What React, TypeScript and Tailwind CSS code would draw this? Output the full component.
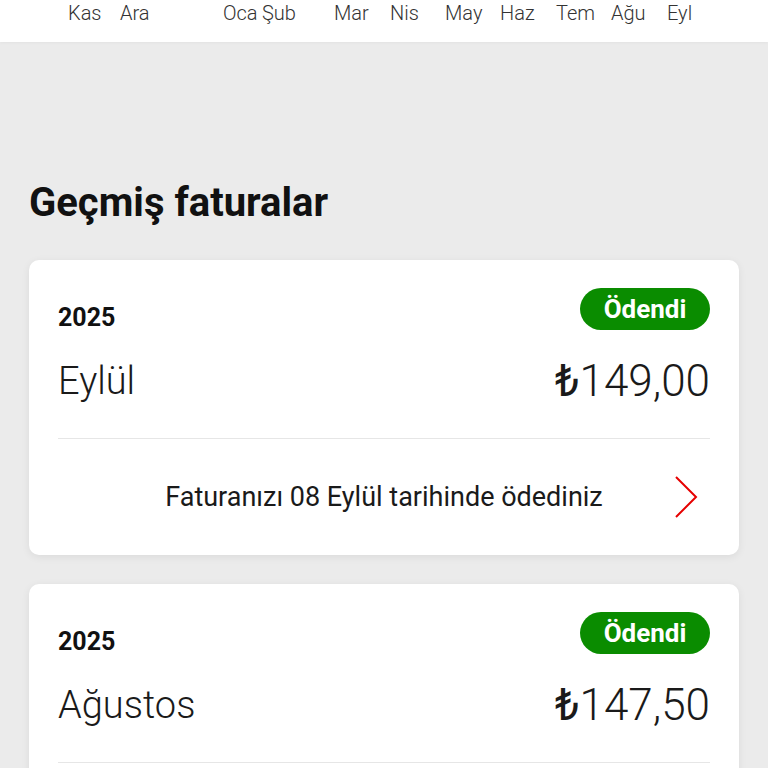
import { ReactNode } from "react";

const months: { label: string; w: string }[] = [
  { label: "Kas", w: "w-[52px]" },
  { label: "Ara", w: "w-[103px]" },
  { label: "Oca", w: "w-[39px]" },
  { label: "Şub", w: "w-[72px]" },
  { label: "Mar", w: "w-[56px]" },
  { label: "Nis", w: "w-[55px]" },
  { label: "May", w: "w-[55px]" },
  { label: "Haz", w: "w-[56px]" },
  { label: "Tem", w: "w-[55px]" },
  { label: "Ağu", w: "w-[56px]" },
  { label: "Eyl", w: "w-[40px]" },
];

const bills = [
  {
    year: "2025",
    month: "Eylül",
    amount: "149,00",
    note: "Faturanızı 08 Eylül tarihinde ödediniz",
  },
  {
    year: "2025",
    month: "Ağustos",
    amount: "147,50",
    note: "Faturanızı 08 Ağustos tarihinde ödediniz",
  },
];

const Chevron = () => (
  <svg width="24" height="42" viewBox="0 0 24 42" fill="none">
    <path d="M2 1 L22 21 L2 41" stroke="#e60000" strokeWidth="2" />
  </svg>
);

const Badge = ({ children }: { children: ReactNode }) => (
  <span className="flex h-[42px] w-[130px] items-center justify-center rounded-full bg-[#0a8c00] text-[26px] font-bold leading-none text-white">
    {children}
  </span>
);

const BillCard = ({ bill }: { bill: (typeof bills)[number] }) => (
  <div className="rounded-[10px] bg-white px-[29px] pt-[28px] shadow-[0_2px_8px_rgba(0,0,0,0.07)]">
    <div className="flex items-end justify-between">
      <span className="text-[25px] font-bold leading-none text-[#111]">
        {bill.year}
      </span>
      <Badge>Ödendi</Badge>
    </div>

    <div className="mt-[29px] flex h-[44px] items-center justify-between">
      <span className="text-[38px] font-light leading-none text-[#1a1a1a]">
        {bill.month}
      </span>
      <span className="text-[44px] font-light leading-none text-[#1a1a1a]">
        <span className="font-normal">₺</span>
        {bill.amount}
      </span>
    </div>

    <div className="mt-[35px] h-px bg-[#e6e6e6]" />

    <div className="relative flex h-[116px] items-center justify-center">
      <span className="text-[27px] leading-none text-[#1a1a1a]">
        {bill.note}
      </span>
      <div className="absolute right-[12px] top-1/2 -translate-y-1/2">
        <Chevron />
      </div>
    </div>
  </div>
);

export default function App() {
  return (
    <div className="min-h-screen bg-[#ebebeb] font-['Roboto','Noto_Sans',sans-serif]">
      <div className="h-[42px] overflow-hidden bg-white shadow-[0_1px_3px_rgba(0,0,0,0.04)]">
        <div className="flex pl-[68px] pt-[2px]">
          {months.map((m) => (
            <span
              key={m.label}
              className={`${m.w} shrink-0 text-[20px] font-light leading-[22px] text-[#333]`}
            >
              {m.label}
            </span>
          ))}
        </div>
      </div>

      <div className="px-[29px]">
        <h2 className="mt-[141px] text-[40px] font-bold leading-[40px] text-[#111]">
          Geçmiş faturalar
        </h2>

        <div className="mt-[37px] flex flex-col gap-[29px] pb-10">
          {bills.map((bill) => (
            <BillCard key={bill.month} bill={bill} />
          ))}
        </div>
      </div>
    </div>
  );
}
